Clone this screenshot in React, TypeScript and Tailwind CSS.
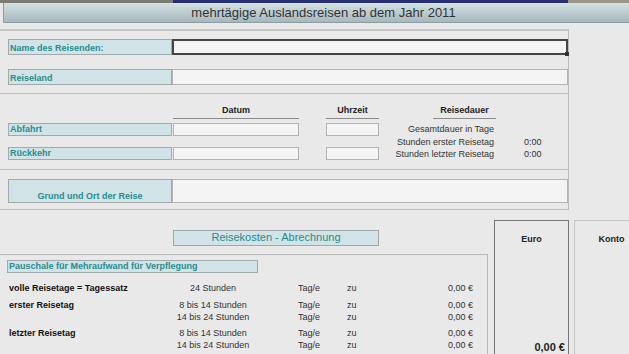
import type { ReactNode } from 'react';

const font = "font-['Liberation_Sans',Arial,sans-serif]";

function FieldLabel({ children, className = '' }: { children: ReactNode; className?: string }) {
  return (
    <div
      className={`w-[164px] shrink-0 bg-[#d1e3e7] border border-[#9eaaac] text-[9px] font-bold leading-none text-[#2a8b8d] flex items-end px-[1px] pb-[1px] ${className}`}
    >
      {children}
    </div>
  );
}

function ColumnHead({ children, className = '' }: { children: ReactNode; className?: string }) {
  return (
    <div
      className={`h-[25px] border-b border-[#8c8c8c] flex items-end justify-center pb-[2px] text-[9px] font-bold leading-[12px] text-[#222] ${className}`}
    >
      {children}
    </div>
  );
}

const inputBox = 'bg-[#f4f4f4] border border-[#b3b3b3]';

// one line of the Verpflegung table
function RateLine({ label, hours }: { label?: string; hours: string }) {
  return (
    <div className="flex h-[12px] items-center">
      <div className="w-[160px] shrink-0 font-bold text-[#111]">{label}</div>
      <div className="w-[88px] shrink-0 text-center">{hours}</div>
      <div className="ml-[41px] w-[49px] shrink-0">Tag/e</div>
      <div className="w-[60px] shrink-0">zu</div>
      <div className="w-[66px] shrink-0 text-right">0,00 €</div>
    </div>
  );
}

export default function App() {
  return (
    <div className={`w-[629px] h-[354px] overflow-hidden bg-[#e9e9e9] text-[#222] ${font}`}>
      {/* window top edge */}
      <div className="flex h-[3px]">
        <div className="w-[173px] bg-[#7d7b72]" />
        <div className="w-[395px] bg-[#283070]" />
        <div className="flex-1 bg-[#9a978a]" />
      </div>

      {/* Title bar */}
      <div className="ml-[3px] h-[20px] border-l border-b border-[#8d9ea3] bg-gradient-to-b from-[#d4e2e5] to-[#a7b7bb] flex items-center justify-center pl-[14px] text-[13px] text-[#333]">
        mehrtägige Auslandsreisen ab dem Jahr 2011
      </div>

      {/* Traveller data */}
      <div className="w-[569px] mt-[6px] border-r border-[#bcbcbc]">
        <div className="border-t-2 border-[#c6c6c6] pt-[8px] pb-[8px] pl-[8px]">
          <div className="flex h-[16px]">
            <FieldLabel>Name des Reisenden:</FieldLabel>
            <div className="relative flex-1 bg-[#f4f4f4] border-2 border-[#454545]">
              <span className="absolute -right-[3px] -bottom-[3px] w-[4px] h-[4px] bg-[#333]" />
            </div>
          </div>
          <div className="flex h-[16px] mt-[14px]">
            <FieldLabel>Reiseland</FieldLabel>
            <div className={`flex-1 ${inputBox}`} />
          </div>
        </div>

        <div className="border-t border-[#bdbdbd] flex pb-[8px]">
          <div className="w-[173px] shrink-0 pl-[8px]">
            <div className="h-[25px]" />
            <FieldLabel className="h-[13px] mt-[4px]">Abfahrt</FieldLabel>
            <FieldLabel className="h-[13px] mt-[11px]">Rückkehr</FieldLabel>
          </div>
          <div className="w-[126px] shrink-0">
            <ColumnHead>Datum</ColumnHead>
            <div className={`h-[13px] mt-[4px] ${inputBox}`} />
            <div className={`h-[13px] mt-[11px] ${inputBox}`} />
          </div>
          <div className="ml-[27px] w-[53px] shrink-0">
            <ColumnHead>Uhrzeit</ColumnHead>
            <div className={`h-[13px] mt-[4px] ${inputBox}`} />
            <div className={`h-[13px] mt-[11px] ${inputBox}`} />
          </div>
          <div className="w-[117px] shrink-0">
            <ColumnHead className="ml-[54px] w-[63px]">Reisedauer</ColumnHead>
            <div className="mt-[4px] pr-[2px] text-right text-[9px] leading-[12.5px] text-[#333]">
              <div>Gesamtdauer in Tage</div>
              <div>Stunden erster Reisetag</div>
              <div>Stunden letzter Reisetag</div>
            </div>
          </div>
          <div className="ml-[28px] pt-[29px] text-[9px] leading-[12.5px] text-[#333]">
            <div className="h-[12.5px]" />
            <div>0:00</div>
            <div>0:00</div>
          </div>
        </div>

        <div className="border-t border-b border-[#bdbdbd] pt-[9px] pb-[6px] pl-[8px]">
          <div className="flex h-[24px]">
            <FieldLabel className="justify-center">Grund und Ort der Reise</FieldLabel>
            <div className={`flex-1 ${inputBox}`} />
          </div>
        </div>
      </div>

      {/* Reisekosten */}
      <div className="flex h-[145px]">
        <div className="w-[488px] shrink-0 flex flex-col pt-[20px]">
          <div className="ml-[173px] w-[206px] h-[16px] bg-[#d1e3e7] border border-[#9eaaac] flex items-center justify-center text-[11px] leading-none text-[#2a8b8d]">
            Reisekosten - Abrechnung
          </div>
          <div className="mt-[8px] flex-1 border-t border-r border-[#b9b9b9] pt-[5px] pl-[7px]">
            <div className="w-[251px] h-[13px] bg-[#d1e3e7] border border-[#9eaaac] flex items-center px-[1px] text-[9px] font-bold leading-none text-[#2a8b8d]">
              Pauschale für Mehraufwand für Verpflegung
            </div>
            <div className="mt-[9px] pl-[2px] text-[9px] leading-[12px] text-[#333]">
              <RateLine label="volle Reisetage = Tagessatz" hours="24 Stunden" />
              <div className="mt-[5px]">
                <RateLine label="erster Reisetag" hours="8 bis 14 Stunden" />
                <RateLine hours="14 bis 24 Stunden" />
              </div>
              <div className="mt-[4px]">
                <RateLine label="letzter Reisetag" hours="8 bis 14 Stunden" />
                <RateLine hours="14 bis 24 Stunden" />
              </div>
            </div>
          </div>
        </div>

        <div className="ml-[6px] mt-[10px] w-[75px] shrink-0 border border-b-0 border-[#767676] flex flex-col">
          <div className="pt-[12px] text-center text-[9px] font-bold leading-[12px] text-[#222]">Euro</div>
          <div className="mt-auto pb-[1px] pr-[3px] text-right text-[11px] font-bold leading-[13px] text-[#222]">0,00 €</div>
        </div>

        <div className="ml-[5px] mt-[10px] w-[75px] shrink-0 border border-b-0 border-[#c4c4c4]">
          <div className="pt-[12px] text-center text-[9px] font-bold leading-[12px] text-[#222]">Konto</div>
        </div>
      </div>
    </div>
  );
}
